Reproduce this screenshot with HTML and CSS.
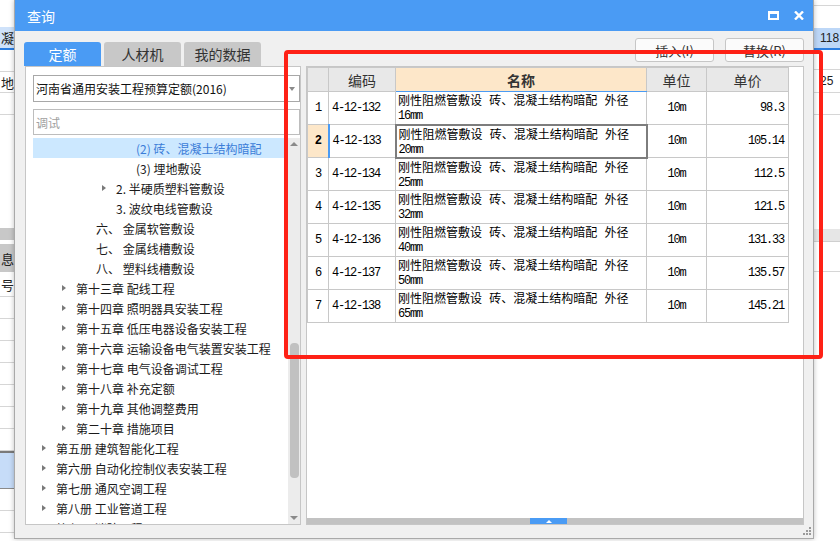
FILE: index.html
```html
<!DOCTYPE html>
<html lang="zh">
<head>
<meta charset="utf-8">
<title>查询</title>
<link rel="stylesheet" href="styles.css">
</head>
<body>
<div class="desk">
  <div class="strip left">
    <div class="cell h27"></div>
    <div class="cell sel h23">凝</div>
    <div class="cell b h22"></div>
    <div class="cell b h21">地</div>
    <div class="cell b h22"></div>
    <div class="cell h113"></div>
    <div class="cell grey h12"></div>
    <div class="cell h4"></div>
    <div class="cell grey h28">息</div>
    <div class="cell b h25">号</div>
    <div class="cell b h22"></div>
    <div class="cell b h22"></div>
    <div class="cell b h22"></div>
    <div class="cell b h22"></div>
    <div class="cell b h22"></div>
    <div class="cell b h22"></div>
    <div class="cell b h22"></div>
    <div class="cell bluerow h38"></div>
    <div class="cell b h22"></div>
    <div class="cell b h22"></div>
  </div>
  <div class="mid"></div>
  <div class="strip right">
    <div class="cell b h6"></div>
    <div class="cell h22"></div>
    <div class="cell sel h22">118</div>
    <div class="cell b h20"></div>
    <div class="cell b h23">25</div>
    <div class="cell b h22"></div>
    <div class="cell h114"></div>
    <div class="cell lgrey h13"></div>
    <div class="cell b h30"></div>
  </div>
</div>

<div class="dialog">
  <div class="titlebar">
    <span class="title">查询</span>
    <span class="tbicons">
      <svg width="11" height="9" viewBox="0 0 11 9"><path d="M0 0H11V9H0Z M2 3H9V7H2Z" fill="#fff" fill-rule="evenodd"/></svg>
      <svg width="10" height="9" viewBox="0 0 10 9"><path d="M1 0.5L9 8.5M9 0.5L1 8.5" stroke="#fff" stroke-width="2.4" fill="none"/></svg>
    </span>
  </div>
  <div class="dbody">
    <div class="toolbar">
      <div class="tabs">
        <div class="tab active">定额</div>
        <div class="tab">人材机</div>
        <div class="tab">我的数据</div>
      </div>
      <div class="btns">
        <button class="btn">插入(I)</button>
        <button class="btn">替换(R)</button>
      </div>
    </div>
    <div class="content">
      <div class="lpanel">
        <div class="select"><span>河南省通用安装工程预算定额(2016)</span><span class="caret"></span></div>
        <div class="search">调试</div>
        <div class="treewrap">
          <div class="tree">
            <div class="node l4 active"><span class="tog"></span><span>(2) 砖、混凝土结构暗配</span></div>
            <div class="node l4"><span class="tog"></span><span>(3) 埋地敷设</span></div>
            <div class="node l3"><span class="tog"><i class="arr"></i></span><span>2. 半硬质塑料管敷设</span></div>
            <div class="node l3"><span class="tog"></span><span>3. 波纹电线管敷设</span></div>
            <div class="node l2"><span class="tog"></span><span>六、 金属软管敷设</span></div>
            <div class="node l2"><span class="tog"></span><span>七、 金属线槽敷设</span></div>
            <div class="node l2"><span class="tog"></span><span>八、 塑料线槽敷设</span></div>
            <div class="node l1"><span class="tog"><i class="arr"></i></span><span>第十三章 配线工程</span></div>
            <div class="node l1"><span class="tog"><i class="arr"></i></span><span>第十四章 照明器具安装工程</span></div>
            <div class="node l1"><span class="tog"><i class="arr"></i></span><span>第十五章 低压电器设备安装工程</span></div>
            <div class="node l1"><span class="tog"><i class="arr"></i></span><span>第十六章 运输设备电气装置安装工程</span></div>
            <div class="node l1"><span class="tog"><i class="arr"></i></span><span>第十七章 电气设备调试工程</span></div>
            <div class="node l1"><span class="tog"><i class="arr"></i></span><span>第十八章 补充定额</span></div>
            <div class="node l1"><span class="tog"><i class="arr"></i></span><span>第十九章 其他调整费用</span></div>
            <div class="node l1"><span class="tog"><i class="arr"></i></span><span>第二十章 措施项目</span></div>
            <div class="node l0"><span class="tog"><i class="arr"></i></span><span>第五册 建筑智能化工程</span></div>
            <div class="node l0"><span class="tog"><i class="arr"></i></span><span>第六册 自动化控制仪表安装工程</span></div>
            <div class="node l0"><span class="tog"><i class="arr"></i></span><span>第七册 通风空调工程</span></div>
            <div class="node l0"><span class="tog"><i class="arr"></i></span><span>第八册 工业管道工程</span></div>
            <div class="node l0"><span class="tog"><i class="arr"></i></span><span>第九册 消防工程</span></div>
          </div>
          <div class="vscroll">
            <span class="sup"></span>
            <span class="thumb"></span>
            <span class="sdown"></span>
          </div>
        </div>
      </div>
      <div class="rpanel">
        <div class="gridarea">
          <table class="grid">
            <colgroup>
              <col class="c0"><col class="c1"><col class="c2"><col class="c3"><col class="c4">
            </colgroup>
            <thead>
              <tr><th></th><th>编码</th><th class="name">名称</th><th>单位</th><th>单价</th></tr>
            </thead>
            <tbody>
              <tr><td class="num">1</td><td class="code">4-12-132</td><td class="nm">刚性阻燃管敷设 砖、混凝土结构暗配 外径<br><span class="m">16mm</span></td><td class="unit">10m</td><td class="price">98.3</td></tr>
              <tr><td class="num cur">2</td><td class="code cur">4-12-133</td><td class="nm focus">刚性阻燃管敷设 砖、混凝土结构暗配 外径<br><span class="m">20mm</span></td><td class="unit">10m</td><td class="price">105.14</td></tr>
              <tr><td class="num">3</td><td class="code">4-12-134</td><td class="nm">刚性阻燃管敷设 砖、混凝土结构暗配 外径<br><span class="m">25mm</span></td><td class="unit">10m</td><td class="price">112.5</td></tr>
              <tr><td class="num">4</td><td class="code">4-12-135</td><td class="nm">刚性阻燃管敷设 砖、混凝土结构暗配 外径<br><span class="m">32mm</span></td><td class="unit">10m</td><td class="price">121.5</td></tr>
              <tr><td class="num">5</td><td class="code">4-12-136</td><td class="nm">刚性阻燃管敷设 砖、混凝土结构暗配 外径<br><span class="m">40mm</span></td><td class="unit">10m</td><td class="price">131.33</td></tr>
              <tr><td class="num">6</td><td class="code">4-12-137</td><td class="nm">刚性阻燃管敷设 砖、混凝土结构暗配 外径<br><span class="m">50mm</span></td><td class="unit">10m</td><td class="price">135.57</td></tr>
              <tr><td class="num">7</td><td class="code">4-12-138</td><td class="nm">刚性阻燃管敷设 砖、混凝土结构暗配 外径<br><span class="m">65mm</span></td><td class="unit">10m</td><td class="price">145.21</td></tr>
            </tbody>
          </table>
        </div>
        <div class="hscroll"><span class="hthumb"><i class="hup"></i></span></div>
      </div>
    </div>
    <svg class="grip" width="8" height="8" viewBox="0 0 8 8"><g fill="#9a9a9a"><rect x="6" y="0" width="2" height="2"/><rect x="3" y="3" width="2" height="2"/><rect x="6" y="3" width="2" height="2"/><rect x="0" y="6" width="2" height="2"/><rect x="3" y="6" width="2" height="2"/><rect x="6" y="6" width="2" height="2"/></g></svg>
  </div>
</div>

<div class="annot"></div>
</body>
</html>
```

FILE: styles.css
```css
* { box-sizing: border-box; }
html, body { margin: 0; padding: 0; }
body {
  width: 840px; height: 541px; overflow: hidden; position: relative;
  background: #fff;
  font-family: "Noto Sans CJK SC", "Liberation Sans", sans-serif;
  font-size: 12px; color: #1a1a1a;
}

/* background application */
.desk { display: flex; height: 541px; }
.strip { display: flex; flex-direction: column; overflow: hidden; }
.strip.left { width: 14px; }
.strip.right { width: 26px; }
.mid { flex: 1; }
.cell { flex: none; display: flex; align-items: center; white-space: nowrap; overflow: hidden; font-size: 13px; color: #222; }
.left .cell { justify-content: flex-end; }
.right .cell { padding-left: 6px; font-family: "Liberation Sans", sans-serif; font-size: 12px; }
.b { border-bottom: 1px solid #d6d6d6; }
.sel { background: #cfe2fa; border-bottom: 2px solid #2b7de0; }
.right .sel { background: #bdd7f7; }
.grey { background: #c8c8c8; }
.lgrey { background: #e6e6e6; border-bottom: 1px solid #cfcfcf; }
.bluerow { background: #c6dcf8; border-top: 2px solid #7a7a7a; border-bottom: 1px solid #8a8a8a; }
.h4 { height: 4px; } .h6 { height: 6px; } .h12 { height: 12px; } .h13 { height: 13px; }
.h20 { height: 20px; } .h21 { height: 21px; } .h22 { height: 22px; } .h23 { height: 23px; }
.h25 { height: 25px; } .h27 { height: 27px; } .h28 { height: 28px; } .h30 { height: 30px; }
.h38 { height: 38px; } .h113 { height: 113px; } .h114 { height: 114px; }

/* dialog window */
.dialog {
  position: absolute; left: 14px; top: 0;
  width: 800px; height: 539px;
  border: 1px solid #a9a9a9; border-top: 0;
  background: #f0f0f0;
  box-shadow: 0 0 5px rgba(0,0,0,.25);
  display: flex; flex-direction: column;
}
.titlebar {
  height: 31px; flex: none; background: #4a9bf4; color: #fff;
  display: flex; align-items: center; padding: 0 9px 0 12px;
}
.title { flex: 1; font-size: 14px; }
.tbicons { display: flex; align-items: center; gap: 15px; }

.dbody { flex: 1; padding: 0 9px 0 10px; display: flex; flex-direction: column; position: relative; }
.toolbar { height: 35px; flex: none; display: flex; justify-content: space-between; }
.tabs { display: flex; gap: 3px; margin-top: 11px; margin-left: -1px; }
.tab {
  width: 77px; height: 24px; line-height: 24px; text-align: center;
  font-size: 14px; background: #c8c8c8; color: #333; border-radius: 3px 3px 0 0;
}
.tab.active { background: #4a9bf4; color: #fff; }
.btns { display: flex; gap: 11px; margin-top: 7px; }
.btn {
  width: 79px; height: 24px; padding: 0;
  border: 1px solid #c6c6c6; border-radius: 3px; background: #fbfbfb;
  font: 13px "Noto Sans CJK SC", sans-serif; color: #333;
}

.content { display: flex; gap: 5px; height: 459px; flex: none; }

/* left panel */
.lpanel {
  width: 276px; flex: none; background: #fff; border: 1px solid #c6c6c6;
  padding: 8px 0 0 7px; display: flex; flex-direction: column; overflow: hidden;
}
.select {
  height: 27px; flex: none; border: 1px solid #a8a8a8;
  display: flex; align-items: center; justify-content: space-between;
  padding: 0 4px 0 2px; font-size: 12px; color: #111;
}
.caret { width: 0; height: 0; border-top: 4px solid #8a8a8a; border-left: 3.5px solid transparent; border-right: 3.5px solid transparent; }
.search {
  height: 26px; flex: none; margin-top: 7px; border: 1px solid #bdbdbd;
  display: flex; align-items: center; padding-left: 2px; color: #a0a0a0;
}
.treewrap { flex: 1; min-height: 0; margin-top: 3px; display: flex; }
.tree { flex: 1; overflow: hidden; }
.node { height: 20px; display: flex; align-items: center; white-space: nowrap; color: #1a1a1a; }
.node.active { background: #cce8ff; color: #3b7dd8; }
.l1 { padding-left: 20px; } .l2 { padding-left: 40px; } .l3 { padding-left: 60px; } .l4 { padding-left: 80px; }
.tog { width: 23px; flex: none; display: flex; align-items: center; padding-left: 9px; }
.arr { display: block; width: 0; height: 0; border-left: 4px solid #7a7a7a; border-top: 3.5px solid transparent; border-bottom: 3.5px solid transparent; }

.vscroll { width: 12px; flex: none; background: #ececec; display: flex; flex-direction: column; align-items: center; }
.sup, .sdown { width: 0; height: 0; border-left: 4px solid transparent; border-right: 4px solid transparent; }
.sup { border-bottom: 4px solid #8a8a8a; margin-top: 4px; }
.thumb { width: 9px; height: 135px; margin-top: 197px; border-radius: 4px; background: #c1c1c1; }
.sdown { border-top: 4px solid #8a8a8a; margin-top: auto; margin-bottom: 4px; }

/* right panel */
.rpanel {
  flex: 1; background: #fff; border: 1px solid #c6c6c6;
  display: flex; flex-direction: column; overflow: hidden;
}
.gridarea { flex: 1; overflow: hidden; }
.grid { border-collapse: collapse; table-layout: fixed; width: 481px; }
.c0 { width: 21px; } .c1 { width: 67px; } .c2 { width: 251px; } .c3 { width: 60px; } .c4 { width: 82px; }
.grid thead tr { height: 24px; }
.grid tbody tr { height: 33px; }
.grid th {
  background: #e8e8e8; border: 1px solid #c8c8c8; padding: 0;
  font-size: 14px; font-weight: normal; color: #333;
}
.grid th.name { background: #fde7c9; font-weight: bold; border-bottom: 1px solid #4a9bf4; }
.grid td {
  border: 1px solid #c8c8c8; padding: 0; color: #000;
  font-family: "Liberation Mono", "Noto Sans CJK SC", monospace; font-size: 12px;
  white-space: nowrap; overflow: hidden;
}
.grid td.num { text-align: center; letter-spacing: -1.2px; }
.grid td.num.cur { background: #fde7c9; font-weight: bold; }
.grid td.code { padding-left: 3px; letter-spacing: -1.2px; }
.grid td.code.cur { border-left: 2px solid #4a9bf4; }
.grid td.nm { vertical-align: top; padding: 3px 0 0 2px; line-height: 14px; }
.grid td.nm.focus { border: 2px solid #7d7d7d; }
.m { letter-spacing: -1.2px; }
.grid td.unit { text-align: center; letter-spacing: -1.2px; }
.grid td.price { text-align: right; padding-right: 4px; letter-spacing: -1.2px; }

.hscroll { height: 6px; flex: none; background: #c2c2c2; display: flex; }
.hthumb { width: 37px; height: 6px; margin-left: 223px; background: #4a9bf4; display: flex; align-items: center; justify-content: center; }
.hup { display: block; width: 0; height: 0; border-left: 3px solid transparent; border-right: 3px solid transparent; border-bottom: 3px solid #fff; }

.grip { position: absolute; right: 2px; bottom: 3px; }

/* annotation overlay */
.annot {
  position: absolute; left: 284px; top: 50px;
  width: 539px; height: 309px;
  border: 4px solid #fe2116; border-radius: 4px;
}
```
